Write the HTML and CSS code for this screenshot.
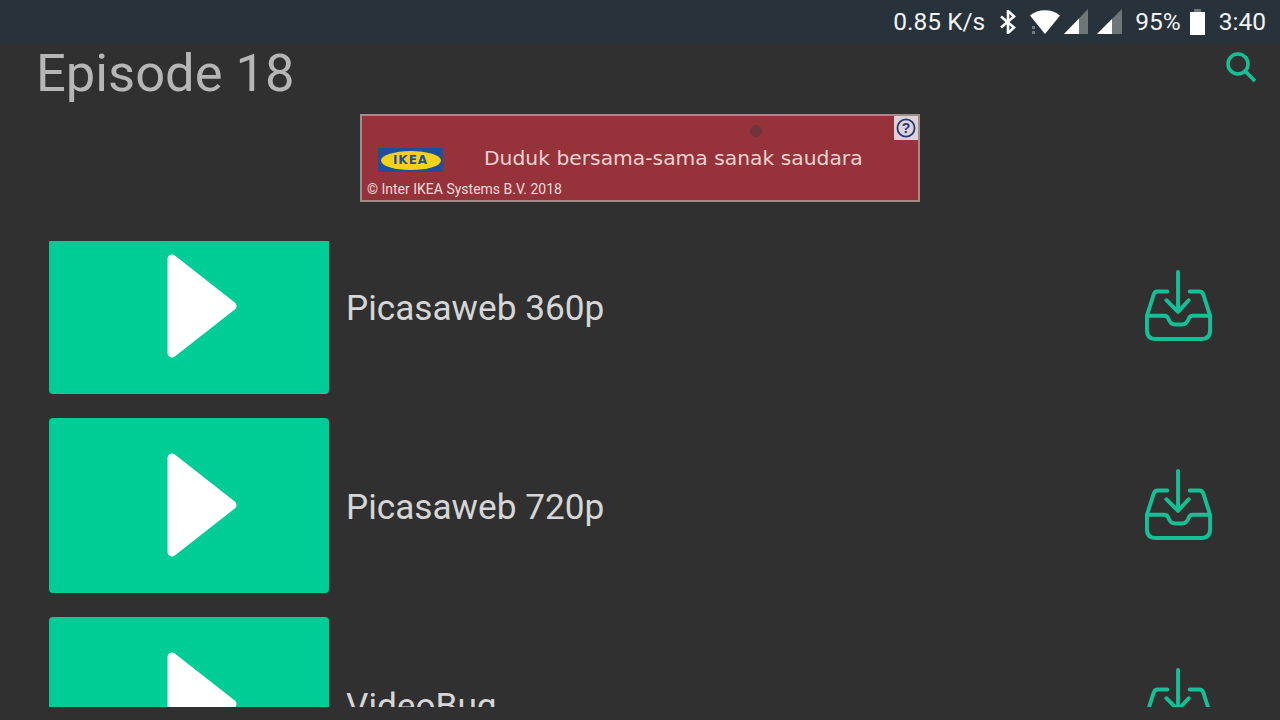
FILE: index.html
```html
<!DOCTYPE html>
<html lang="en">
<head>
    <meta charset="UTF-8">
    <title>Episode 18</title>
    <link rel="stylesheet" href="styles.css">
</head>
<body>

<div class="statusbar">
    <span class="speed">0.85 K/s</span>
    <svg class="ic-bt" width="18" height="24" viewBox="0 0 18 24"><path d="M2 6.5 15 17.5 9 23V1l6 5.5L2 17.5" fill="none" stroke="#fff" stroke-width="2.6"/></svg>
    <svg class="ic-wifi" width="32" height="26" viewBox="0 0 32 26"><path d="M1 6.5C9-.5 23-.5 31 6.5L16 25Z" fill="#fff"/><rect x="3" y="17" width="3" height="3" fill="#6f7a80"/><rect x="3" y="22" width="3" height="3" fill="#6f7a80"/></svg>
    <svg class="ic-signal" width="24" height="25" viewBox="0 0 24 25"><path d="M0 25 24 0V25Z" fill="#6f7678"/><path d="M0 25 15 9.5V25Z" fill="#fff"/></svg>
    <svg class="ic-signal2" width="25" height="25" viewBox="0 0 25 25"><path d="M0 25 25 0V25Z" fill="#6f7678"/><path d="M0 25 15 10V25Z" fill="#fff"/></svg>
    <span class="battery-pct">95%</span>
    <svg class="ic-battery" width="15" height="26" viewBox="0 0 15 26"><rect x="4" y="0" width="7" height="3" fill="#6f7678"/><rect x="0" y="3" width="15" height="23" fill="#fff"/></svg>
    <span class="clock">3:40</span>
</div>

<div class="header">
    <h1 class="title">Episode 18</h1>
    <svg class="search" width="32" height="32" viewBox="0 0 32 32"><circle cx="13" cy="13" r="10" fill="none" stroke="#14c196" stroke-width="3.5"/><path d="M20.5 20.5 30 30" stroke="#14c196" stroke-width="3.8"/></svg>
</div>

<div class="ad">
    <span class="ad-dot"></span>
    <span class="ad-help">
        <svg width="20" height="20" viewBox="0 0 20 20"><circle cx="10" cy="10" r="8.6" fill="none" stroke="#26386f" stroke-width="1.8"/><text x="10" y="15" text-anchor="middle" class="ad-help-mark">?</text></svg>
    </span>
    <div class="ad-main">
        <div class="ikea"><span class="ikea-oval">IKEA</span></div>
        <span class="ad-text">Duduk bersama-sama sanak saudara</span>
    </div>
    <div class="ad-copy">© Inter IKEA Systems B.V. 2018</div>
</div>

<div class="list">
    <div class="row first">
        <div class="thumb"><svg width="72" height="104" viewBox="0 0 72 104"><path d="M6 5 66 52 6 99Z" fill="#fff" stroke="#fff" stroke-width="9" stroke-linejoin="round"/></svg></div>
        <span class="name">Picasaweb 360p</span>
        <svg class="dl" width="68" height="74" viewBox="0 0 70 76"><use href="#tray"/></svg>
    </div>
    <div class="row">
        <div class="thumb"><svg width="72" height="104" viewBox="0 0 72 104"><path d="M6 5 66 52 6 99Z" fill="#fff" stroke="#fff" stroke-width="9" stroke-linejoin="round"/></svg></div>
        <span class="name">Picasaweb 720p</span>
        <svg class="dl" width="68" height="74" viewBox="0 0 70 76"><use href="#tray"/></svg>
    </div>
    <div class="row">
        <div class="thumb"><svg width="72" height="104" viewBox="0 0 72 104"><path d="M6 5 66 52 6 99Z" fill="#fff" stroke="#fff" stroke-width="9" stroke-linejoin="round"/></svg></div>
        <span class="name">VideoBug</span>
        <svg class="dl" width="68" height="74" viewBox="0 0 70 76"><use href="#tray"/></svg>
    </div>
</div>

<svg class="defs" width="0" height="0">
    <g id="tray" fill="none" stroke="#14c196" stroke-width="4" stroke-linecap="round" stroke-linejoin="round">
        <path d="M34 2V42M22 31 34 43 45 31"/>
        <path d="M23 22H13Q10 22 9 25L2 47V62Q2 71 11 71H58Q67 71 67 62V47L60 25Q59 22 56 22H46"/>
        <path d="M2 47H20Q23 47 24 50 26 56 31 56H38Q43 56 45 50 46 47 49 47H67"/>
    </g>
</svg>

</body>
</html>
```

FILE: styles.css
```css
/* Page */
html, body {
    margin: 0;
    height: 720px;
    overflow: hidden;
}
body {
    background-color: #303030;
    font-family: Roboto, "Noto Sans", sans-serif;
    display: flex;
    flex-direction: column;
}
.defs {
    position: absolute;
}

/* Status bar */
.statusbar {
    height: 43px;
    flex: none;
    background-color: #28323a;
    color: #f2f4f4;
    font-size: 24.5px;
    display: flex;
    align-items: center;
    justify-content: flex-end;
    padding-right: 14px;
}
.ic-bt {
    margin-left: 14px;
}
.ic-wifi {
    margin-left: 12px;
}
.ic-signal {
    margin-left: 3px;
}
.ic-signal2 {
    margin-left: 9px;
}
.battery-pct {
    margin-left: 13px;
}
.ic-battery {
    margin-left: 9px;
}
.clock {
    margin-left: 14px;
}

/* Title row */
.header {
    height: 71px;
    flex: none;
    display: flex;
    justify-content: space-between;
    padding: 0 23px 0 36px;
}
.title {
    margin: 0;
    font-size: 52.5px;
    font-weight: 400;
    line-height: 60px;
    color: #b6b6b6;
}
.search {
    margin-top: 8px;
}

/* Ad banner */
.ad {
    position: relative;
    box-sizing: border-box;
    width: 560px;
    height: 88px;
    margin: 0 auto 39px;
    flex: none;
    background-color: #96323a;
    border: 2px solid #a08c88;
    display: flex;
    flex-direction: column;
}
.ad-main {
    display: flex;
    align-items: center;
    padding: 28px 0 0 16px;
}
.ikea {
    width: 65px;
    height: 24px;
    margin-top: 4px;
    background-color: #1d4f9c;
    display: flex;
    align-items: center;
    justify-content: center;
}
.ikea-oval {
    width: 60px;
    height: 19px;
    border-radius: 50%;
    background-color: #f2d21f;
    color: #1d4f9c;
    font-family: "DejaVu Sans", sans-serif;
    font-size: 12px;
    font-weight: 700;
    letter-spacing: 1px;
    line-height: 19px;
    text-align: center;
}
.ad-text {
    margin-left: 41px;
    font-family: "DejaVu Sans", sans-serif;
    font-size: 20.3px;
    color: #f0d2d2;
    white-space: nowrap;
}
.ad-copy {
    margin: 9px 0 0 5px;
    font-size: 14px;
    color: #ecdcdc;
}
.ad-dot {
    position: absolute;
    left: 388px;
    top: 9px;
    width: 12px;
    height: 12px;
    border-radius: 50%;
    background-color: #70343a;
}
.ad-help {
    position: absolute;
    right: 0;
    top: 0;
    width: 24px;
    height: 24px;
    background-color: #dcd2da;
    display: flex;
    align-items: center;
    justify-content: center;
}
.ad-help-mark {
    font-family: "Liberation Sans", sans-serif;
    font-size: 14px;
    font-weight: 700;
    fill: #26386f;
}

/* Video list, scrolled a little */
.list {
    height: 466px;
    flex: none;
    overflow: hidden;
    padding-left: 49px;
    padding-right: 67px;
}
.row {
    display: flex;
    align-items: center;
    margin-bottom: 24px;
}
.row.first {
    margin-top: -22px;
}
.thumb {
    width: 280px;
    height: 175px;
    flex: none;
    background-color: #00cc96;
    border-radius: 4px;
    display: flex;
    align-items: center;
    justify-content: center;
}
.thumb svg {
    margin: 0 0 1px 26px;
}
.name {
    margin: 3px 0 0 17px;
    flex: 1;
    font-size: 35.2px;
    color: #d6d6d6;
}
.dl {
    flex: none;
}
```
